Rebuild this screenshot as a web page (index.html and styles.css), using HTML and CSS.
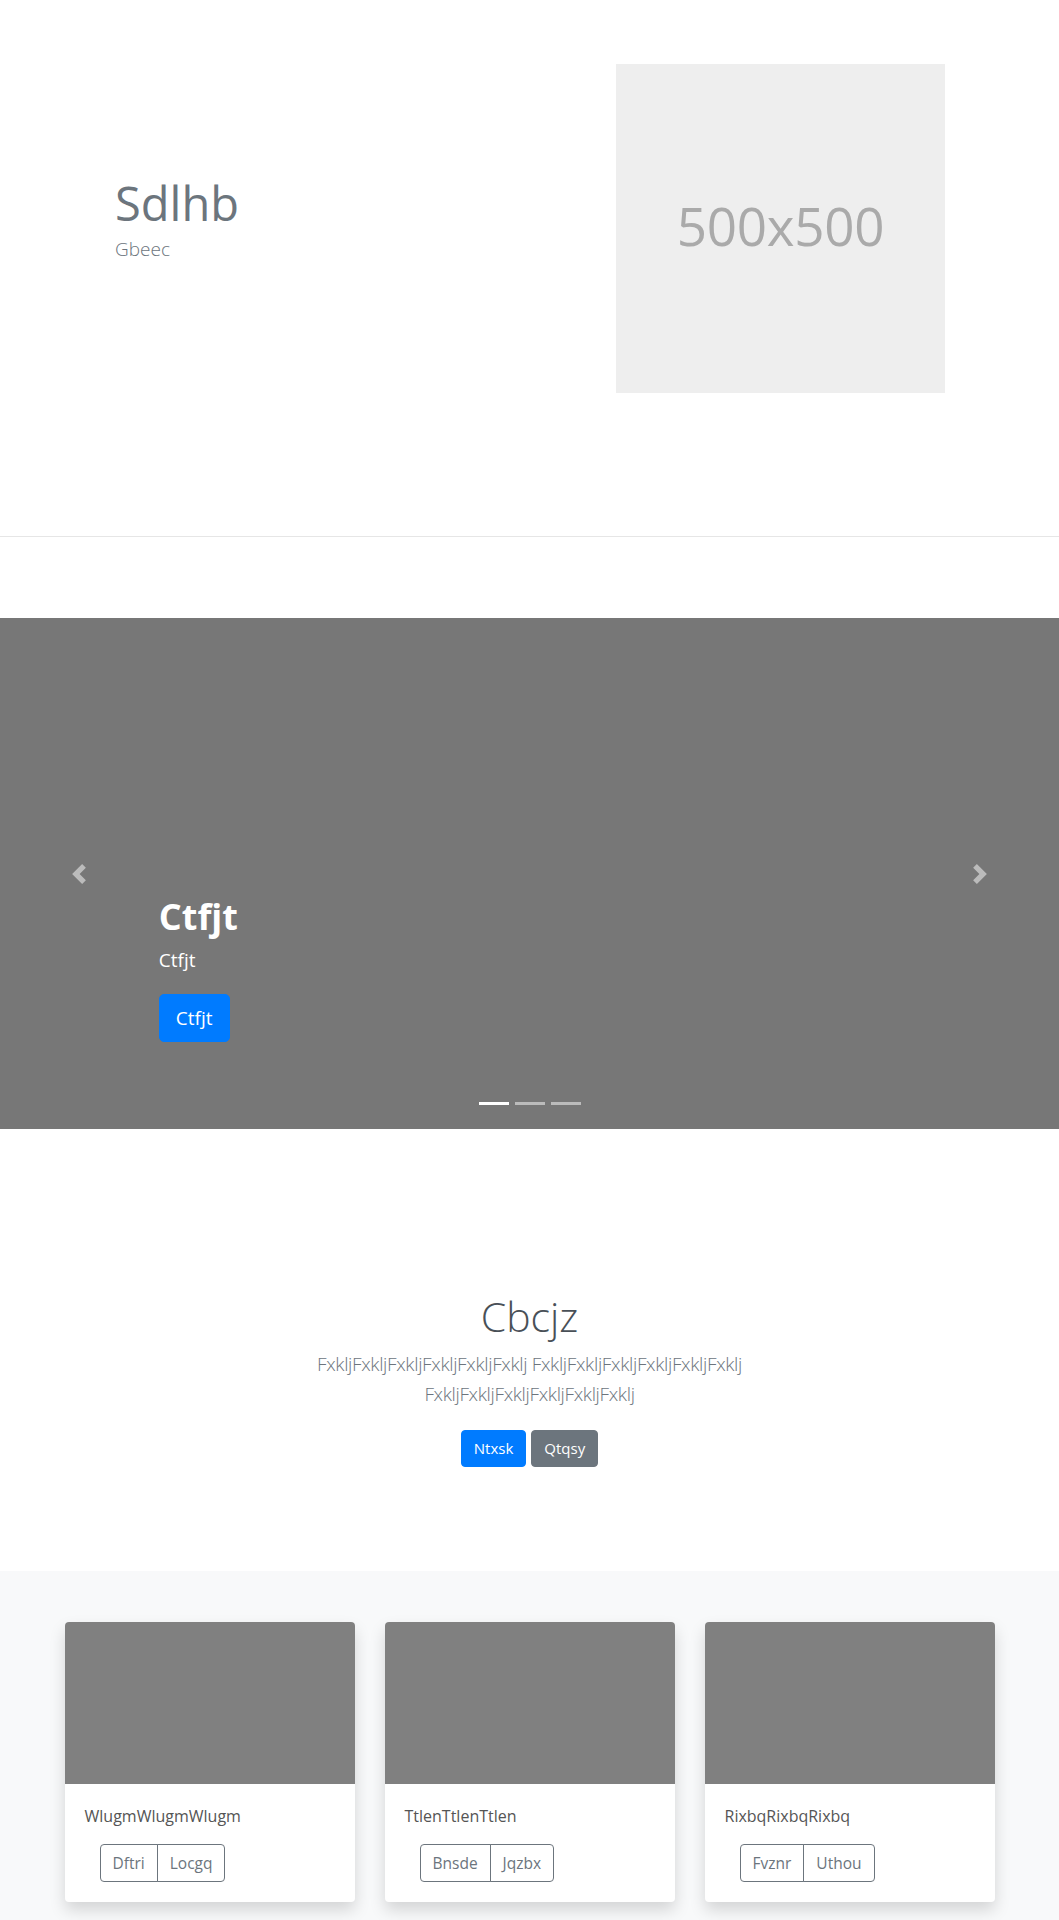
FILE: index.html
```html
<!DOCTYPE html>
<html lang="en">
<head>
<meta charset="utf-8">
<title>Sdlhb</title>
<link rel="stylesheet" href="styles.css">
</head>
<body>
<section class="hero">
  <div class="hero-text">
    <h1 class="hero-title">Sdlhb</h1>
    <p class="hero-lead">Gbeec</p>
  </div>
  <div class="placeholder">500x500</div>
</section>
<hr class="divider">

<div class="carousel">
  <ol class="indicators">
    <li class="active"></li>
    <li></li>
    <li></li>
  </ol>
  <div class="caption">
    <h2 class="caption-title">Ctfjt</h2>
    <p class="caption-text">Ctfjt</p>
    <a class="btn btn-primary btn-lg" href="#">Ctfjt</a>
  </div>
  <a class="ctrl ctrl-prev" href="#" aria-label="Previous">
    <svg width="20" height="20" viewBox="0 0 8 8"><path d="M5.25 0l-4 4 4 4 1.5-1.5L4.25 4l2.5-2.5L5.25 0z"/></svg>
  </a>
  <a class="ctrl ctrl-next" href="#" aria-label="Next">
    <svg width="20" height="20" viewBox="0 0 8 8"><path d="M2.75 0l-1.5 1.5L3.75 4l-2.5 2.5L2.75 8l4-4-4-4z"/></svg>
  </a>
</div>

<section class="intro">
  <h2 class="intro-title">Cbcjz</h2>
  <p class="intro-lead">FxkljFxkljFxkljFxkljFxkljFxklj FxkljFxkljFxkljFxkljFxkljFxklj FxkljFxkljFxkljFxkljFxkljFxklj</p>
  <div class="intro-actions">
    <a class="btn btn-primary" href="#">Ntxsk</a>
    <a class="btn btn-secondary" href="#">Qtqsy</a>
  </div>
</section>

<section class="album">
  <div class="cards">
    <div class="card">
      <div class="card-img"></div>
      <div class="card-body">
        <p class="card-text">WlugmWlugmWlugm</p>
        <div class="btn-group">
          <button class="btn-outline">Dftri</button>
          <button class="btn-outline">Locgq</button>
        </div>
      </div>
    </div>
    <div class="card">
      <div class="card-img"></div>
      <div class="card-body">
        <p class="card-text">TtlenTtlenTtlen</p>
        <div class="btn-group">
          <button class="btn-outline">Bnsde</button>
          <button class="btn-outline">Jqzbx</button>
        </div>
      </div>
    </div>
    <div class="card">
      <div class="card-img"></div>
      <div class="card-body">
        <p class="card-text">RixbqRixbqRixbq</p>
        <div class="btn-group">
          <button class="btn-outline">Fvznr</button>
          <button class="btn-outline">Uthou</button>
        </div>
      </div>
    </div>
  </div>
</section>
</body>
</html>
```

FILE: styles.css
```css
* { box-sizing: border-box; }

body {
  margin: 0;
  font-family: "Open Sans", "Noto Sans", sans-serif;
  font-size: 16px;
  line-height: 1.5;
  color: #212529;
  background: #fff;
}

/* Hero */
.hero {
  display: flex;
  align-items: center;
  justify-content: space-between;
  padding: 64px 114px 143px 115px;
}
.hero-text { margin-bottom: 18px; }
.hero-title {
  margin: 0 0 4px;
  font-size: 47px;
  font-weight: 400;
  line-height: 1.2;
  color: #6c757d;
}
.hero-lead {
  margin: 0;
  font-size: 19px;
  font-weight: 300;
  line-height: 1.5;
  color: #6c757d;
}
.placeholder {
  width: 329px;
  height: 329px;
  background: #eeeeee;
  color: #aaaaaa;
  display: flex;
  align-items: center;
  justify-content: center;
  font-size: 53px;
  letter-spacing: -0.3px;
  padding-bottom: 6px;
}

.divider {
  margin: 0;
  border: 0;
  border-top: 1px solid #e6e6e6;
}

/* Carousel */
.carousel {
  position: relative;
  margin-top: 81px;
  height: 511px;
  background: #777777;
  display: flex;
  flex-direction: column;
  justify-content: flex-end;
  padding: 0 0 87px 15%;
  color: #fff;
}
.caption-title {
  margin: 0 0 9px;
  font-size: 36px;
  font-weight: 700;
  line-height: 1.2;
}
.caption-text {
  margin: 0 0 20px;
  font-size: 19px;
  line-height: 27px;
}
.ctrl {
  position: absolute;
  top: 0;
  bottom: 0;
  width: 15%;
  display: flex;
  align-items: center;
  justify-content: center;
  opacity: .5;
}
.ctrl svg { fill: #fff; display: block; }
.ctrl-prev { left: 0; }
.ctrl-next { right: 0; }
.indicators {
  position: absolute;
  left: 0;
  right: 0;
  bottom: 24px;
  margin: 0;
  padding: 0;
  list-style: none;
  display: flex;
  justify-content: center;
}
.indicators li {
  width: 30px;
  height: 3px;
  margin: 0 3px;
  background: #fff;
  opacity: .5;
}
.indicators li.active { opacity: 1; }

/* Buttons */
.btn {
  display: inline-block;
  font-size: 15px;
  line-height: 1.5;
  padding: 6px 12px;
  border: 1px solid transparent;
  border-radius: 4px;
  color: #fff;
  text-decoration: none;
  text-align: center;
}
.btn-lg {
  font-size: 19px;
  padding: 8px 16px;
  border-radius: 5px;
  align-self: flex-start;
  line-height: 30px;
}
.btn-primary { background: #007bff; border-color: #007bff; }
.btn-secondary { background: #6c757d; border-color: #6c757d; }

/* Intro */
.intro {
  padding: 163px 20px 104px;
  text-align: center;
}
.intro-title {
  margin: 0 0 8px;
  font-size: 41px;
  font-weight: 300;
  line-height: 1.2;
  color: #495057;
}
.intro-lead {
  max-width: 560px;
  margin: 0 auto 21px;
  font-size: 19px;
  font-weight: 300;
  line-height: 30px;
  letter-spacing: -0.35px;
  color: #6c757d;
}
.intro-actions {
  display: flex;
  justify-content: center;
  gap: 5px;
}

/* Album */
.album {
  background: #f8f9fa;
  padding: 51px 0 48px;
}
.cards {
  width: 930px;
  margin: 0 auto;
  display: grid;
  grid-template-columns: repeat(3, 1fr);
  gap: 30px;
}
.card {
  background: #fff;
  border-radius: 4px;
  overflow: hidden;
  box-shadow: 0 8px 16px rgba(0, 0, 0, .15);
}
.card-img {
  height: 162px;
  background: #808080;
}
.card-body { padding: 20px; }
.card-text {
  margin: 0 0 16px;
  font-size: 16px;
  line-height: 24px;
  color: #555;
}
.btn-group {
  display: inline-flex;
  margin-left: 15px;
}
.btn-outline {
  font-family: inherit;
  font-size: 15.5px;
  line-height: 24px;
  padding: 6px 12px;
  background: transparent;
  color: #6c757d;
  border: 1px solid #6c757d;
}
.btn-outline:first-child { border-radius: 4px 0 0 4px; }
.btn-outline:last-child { border-radius: 0 4px 4px 0; margin-left: -1px; }
```
